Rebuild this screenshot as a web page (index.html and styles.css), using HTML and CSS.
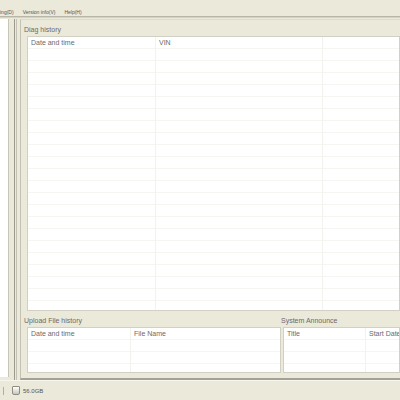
FILE: index.html
```html
<!DOCTYPE html>
<html lang="en">
<head>
    <meta charset="UTF-8">
    <title>Diag</title>
    <link rel="stylesheet" href="styles.css">
</head>
<body>

<div class="menubar">
    <span class="menu-item">ing(D)</span>
    <span class="menu-item">Version info(V)</span>
    <span class="menu-item">Help(H)</span>
</div>

<div class="workspace">
    <div class="tree"></div>
    <div class="splitter"></div>

    <div class="main">
        <div class="group diag">
            <div class="group-title">Diag history</div>
            <div class="listview">
                <div class="col" style="width: 128px">Date and time</div>
                <div class="col" style="width: 167px">VIN</div>
                <div class="col last"></div>
            </div>
        </div>

        <div class="bottom-row">
            <div class="group upload">
                <div class="group-title">Upload File history</div>
                <div class="listview">
                    <div class="col" style="width: 103px">Date and time</div>
                    <div class="col last">File Name</div>
                </div>
            </div>
            <div class="group announce">
                <div class="group-title">System Announce</div>
                <div class="listview">
                    <div class="col" style="width: 82px">Title</div>
                    <div class="col last">Start Date</div>
                </div>
            </div>
        </div>
    </div>
</div>

<div class="statusbar">
    <span class="grip"></span>
    <span class="disk-icon"></span>
    <span class="status-text">56.0GB</span>
</div>

</body>
</html>
```

FILE: styles.css
```css
/* General styling */
body {
    margin: 0;
    width: 400px;
    height: 400px;
    overflow: hidden;
    background: #ebe9da;
    font-family: "Liberation Sans", Arial, sans-serif;
    font-size: 7px;
    color: #6a6a6a;
    display: flex;
    flex-direction: column;
}

/* Menu bar */
.menubar {
    height: 17px;
    box-sizing: border-box;
    padding-top: 8px;
    display: flex;
    align-items: center;
    gap: 9px;
    font-size: 5px;
    color: #555;
    border-bottom: 1px solid #b8b6a8;
    box-shadow: 0 1px 0 #d4d2c4;
    flex-shrink: 0;
}

/* Workspace */
.workspace {
    flex: 1;
    display: flex;
    margin-top: 2px;
    min-height: 0;
}

.tree {
    width: 8px;
    background: #ffffff;
    border-right: 1px solid #c8c6b8;
    margin-bottom: 3px;
}

.splitter {
    width: 1px;
    margin-left: 5px;
    border-left: 1px solid #9c9a8c;
    border-right: 1px solid #c4c2b4;
}

.main {
    flex: 1;
    margin-left: 3px;
    display: flex;
    flex-direction: column;
    border-left: 1px solid #c4c2b4;
    border-top: 1px solid #dcdacc;
    border-bottom: 2px solid #a4a296;
    padding: 2px 0 5px 3px;
    min-width: 0;
}

/* Group boxes */
.group {
    display: flex;
    flex-direction: column;
    min-width: 0;
}

.group-title {
    height: 14px;
    line-height: 16px;
    white-space: nowrap;
}

.group.diag {
    flex: 1;
}

.listview {
    flex: 1;
    margin-left: 3px;
    display: flex;
    background-color: #ffffff;
    background-image: repeating-linear-gradient(to bottom, transparent 0, transparent 11px, #f5f5f2 11px, #f5f5f2 12px);
    border: 1px solid #d2d0c4;
    overflow: hidden;
}

.col {
    box-sizing: border-box;
    padding: 2px 3px;
    line-height: 8px;
    border-right: 1px solid #f2f2ee;
    flex-shrink: 0;
    white-space: nowrap;
}

.col.last {
    flex: 1;
    border-right: none;
}

.bottom-row {
    height: 62px;
    display: flex;
    flex-shrink: 0;
}

.group.upload {
    width: 257px;
    flex-shrink: 0;
}

.group.announce {
    flex: 1;
}

.group.upload .group-title,
.group.announce .group-title {
    height: 16px;
    line-height: 20px;
}

.group.announce .listview {
    margin-left: 2px;
}

/* Status bar */
.statusbar {
    height: 19px;
    flex-shrink: 0;
    display: flex;
    align-items: center;
    border-top: 1px solid #f6f5ee;
}

.grip {
    width: 1px;
    height: 8px;
    background: #b0ae9f;
    margin-left: 3px;
}

.disk-icon {
    width: 6px;
    height: 7px;
    margin-left: 8px;
    border: 1px solid #8f8d82;
    border-radius: 1px 1px 2px 2px;
    background: linear-gradient(#ffffff, #c8c6ba);
}

.status-text {
    margin-left: 3px;
    color: #555;
    font-size: 6px;
}
```
